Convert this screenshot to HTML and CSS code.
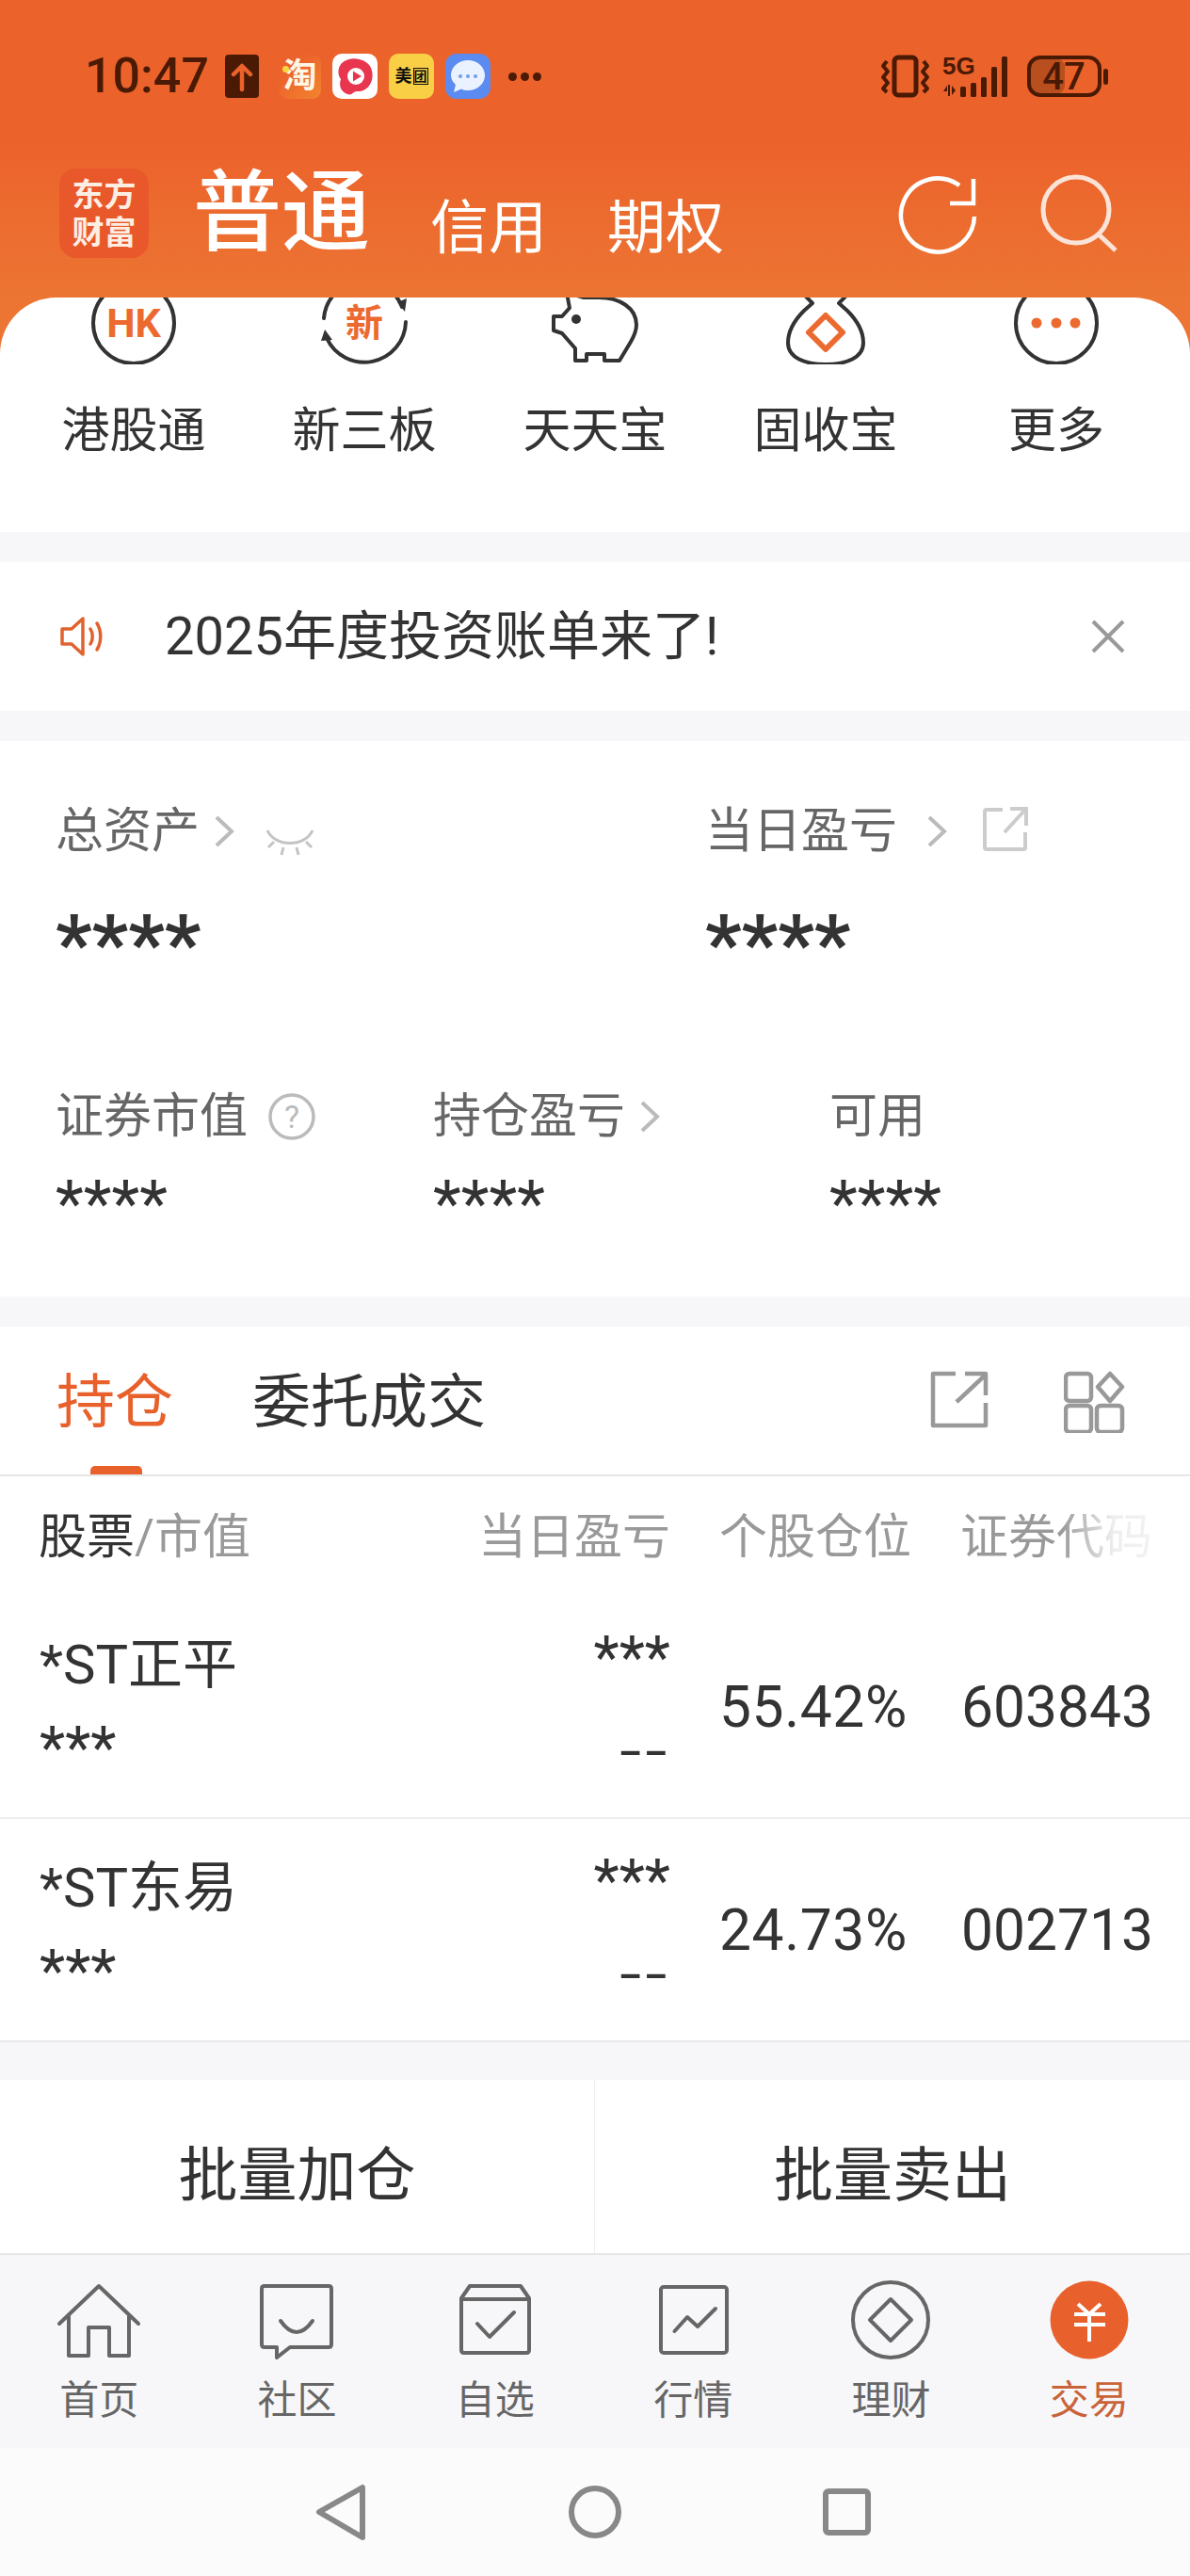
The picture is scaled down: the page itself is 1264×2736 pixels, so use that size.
FILE: index.html
```html
<!DOCTYPE html>
<html lang="zh-CN">
<head>
<meta charset="utf-8">
<title>交易</title>
<link rel="stylesheet" href="styles.css">
</head>
<body>
<div class="page">
  <header class="hero">
    <div class="status">
      <span class="time">10:47</span>
      <span class="st-up"><svg width="36" height="46" viewBox="0 0 36 46"><path class="up-arrow" d="M18 37V13M9 21l9-9 9 9"/></svg></span>
      <span class="st-tao"><i class="tao-dot"></i>淘</span>
      <span class="st-play"><svg width="48" height="48" viewBox="0 0 48 48"><path class="play-blob" d="M10 10C18 2 36 4 41 15c5 12-2 26-15 25-4 0-5 5-10 3C8 40 7 33 9 27 5 22 6 14 10 10Z"/><circle class="play-disc" cx="25" cy="24" r="9"/><path class="play-tri" d="M22 18.500L31 24l-9 5.500Z"/></svg></span>
      <span class="st-mt"><span class="mt-text">美</span><span class="mt-box">团</span></span>
      <span class="st-msg"><svg width="48" height="48" viewBox="0 0 48 48"><path class="msg-bubble" d="M24 7c10 0 18 7 18 16s-8 16-18 16c-3 0-5-.5-7-1.500L9 41l2-8c-3-3-5-6-5-10C6 14 14 7 24 7Z"/><circle class="msg-dot" cx="16" cy="24" r="2"/><circle class="msg-dot" cx="24" cy="24" r="2"/><circle class="msg-dot" cx="32" cy="24" r="2"/></svg></span>
      <span class="st-more"><i></i><i></i><i></i></span>
      <span class="st-right">
        <svg width="51" height="44" viewBox="0 0 51 44"><rect class="sb-line sb-thick" x="14" y="2" width="23" height="40" rx="4"/><path class="sb-line" d="M6 6L2 11l5 6-5 6 5 6-5 6 4 4M45 6l4 5-5 6 5 6-5 6 5 6-4 4"/></svg>
        <svg width="71" height="46" viewBox="0 0 71 46"><text class="sb-5g" x="0" y="21">5G</text><path class="sb-fill" d="M6 32v12h2V32ZM1 39l4-6v6ZM10 33v10l4-5Z"/><rect class="sb-fill" x="19" y="34" width="6" height="11" rx="1.500"/><rect class="sb-fill" x="30" y="30" width="6" height="15" rx="1.500"/><rect class="sb-fill" x="41" y="24" width="6" height="21" rx="1.500"/><rect class="sb-fill" x="52" y="13" width="6" height="32" rx="1.500"/><rect class="sb-fill" x="63" y="2" width="6" height="43" rx="1.500"/></svg>
        <svg width="86" height="46" viewBox="0 0 86 46"><rect class="bat-fill" x="3" y="4" width="37" height="38" rx="9"/><rect class="sb-line" x="2" y="3" width="75" height="40" rx="12"/><rect class="sb-fill" x="81" y="15" width="5" height="17" rx="2.500"/><text class="bat-text" x="39" y="37">47</text></svg>
      </span>
    </div>
    <div class="hero-row">
      <div class="logo"><span>东方</span><span>财富</span></div>
      <span class="mode mode-on">普通</span>
      <span class="mode">信用</span>
      <span class="mode">期权</span>
      <div class="hero-icons">
        <svg width="90" height="90" viewBox="0 0 90 90"><path class="ic-white" d="M84 46A39 39 0 1 1 68 13M83 6V32H58"/></svg>
        <svg width="90" height="90" viewBox="0 0 90 90"><circle class="ic-cream" cx="43" cy="44" r="35"/><path class="ic-cream" d="M68 71L85 87"/></svg>
      </div>
    </div>
  </header>

  <section class="shortcuts">
    <div class="sc-item">
      <svg class="sc-icon" width="100" height="71" viewBox="0 17 100 71"><circle class="ln-dark" cx="50" cy="44" r="43"/><text class="sc-glyph sc-hk" x="50" y="59">HK</text></svg>
      <span>港股通</span>
    </div>
    <div class="sc-item">
      <svg class="sc-icon" width="100" height="71" viewBox="0 17 100 71"><path class="ln-dark" d="M7 39A43 43 0 0 1 90 27M94 43A44 44 0 0 1 10 60"/><path class="fl-dark" d="M85 22L95 18 93 32ZM8 51L4 63 16 62Z"/><text class="sc-glyph sc-new" x="50" y="58">新</text></svg>
      <span>新三板</span>
    </div>
    <div class="sc-item">
      <svg class="sc-icon" width="100" height="71" viewBox="0 17 100 71"><path class="ln-dark" d="M20 12L23 28 15 37H6V52L15 55 29 71V84H41V77H60V84H76L88 64C92 57 94 52 94 46 94 28 76 17 54 17H38Z"/><circle class="fl-dark" cx="30" cy="40" r="5"/></svg>
      <span>天天宝</span>
    </div>
    <div class="sc-item">
      <svg class="sc-icon" width="100" height="71" viewBox="0 17 100 71"><path class="ln-dark" d="M27 14L36 23 27 31C16 42 10 54 10 65 10 81 28 88 50 88S90 81 90 65C90 54 84 42 73 31L64 23 73 14"/><path class="ln-orange" d="M50 36L68 54 50 72 32 54Z"/></svg>
      <span>固收宝</span>
    </div>
    <div class="sc-item">
      <svg class="sc-icon" width="100" height="71" viewBox="0 17 100 71"><circle class="ln-dark" cx="50" cy="44" r="43"/><circle class="fl-orange" cx="29" cy="44" r="5.500"/><circle class="fl-orange" cx="50" cy="44" r="5.500"/><circle class="fl-orange" cx="70" cy="44" r="5.500"/></svg>
      <span>更多</span>
    </div>
  </section>

  <section class="notice">
    <svg width="50" height="44" viewBox="0 0 50 44"><path class="ln-speaker" d="M3 14H13L25 3V41L13 30H3ZM33 14C36 18 36 26 33 30M40 8C45 16 45 28 40 36"/></svg>
    <span class="notice-text">2025年度投资账单来了!</span>
    <svg class="notice-close" width="38" height="38" viewBox="0 0 38 38"><path class="ln-close" d="M3 3L35 35M35 3L3 35"/></svg>
  </section>

  <section class="assets">
    <div class="asset-top">
      <div class="asset-main">
        <div class="a-label">总资产<svg class="chev" width="24" height="36" viewBox="0 0 24 36"><path d="M4 3L20 18 4 33"/></svg><svg class="eye" width="52" height="30" viewBox="0 0 52 30"><path d="M2 2C10 20 42 20 50 2M9 14L3 20M19 20L17 28M33 20L35 28M43 14L49 20"/></svg></div>
        <div class="big-stars">****</div>
      </div>
      <div class="asset-main">
        <div class="a-label">当日盈亏<svg class="chev chev-wide" width="24" height="36" viewBox="0 0 24 36"><path d="M4 3L20 18 4 33"/></svg><svg class="share-lt" width="50" height="50" viewBox="0 0 50 50"><path d="M22 4H5Q3 4 3 6V44Q3 46 5 46H44Q46 46 46 44V28M24 28L46 4M30 3H47V21"/></svg></div>
        <div class="big-stars">****</div>
      </div>
    </div>
    <div class="asset-sub">
      <div>
        <div class="a-label">证券市值<svg class="help" width="52" height="52" viewBox="0 0 52 52"><circle cx="26" cy="26" r="23"/><text x="26" y="38">?</text></svg></div>
        <div class="small-stars">****</div>
      </div>
      <div>
        <div class="a-label">持仓盈亏<svg class="chev chev-near" width="24" height="36" viewBox="0 0 24 36"><path d="M4 3L20 18 4 33"/></svg></div>
        <div class="small-stars">****</div>
      </div>
      <div>
        <div class="a-label">可用</div>
        <div class="small-stars">****</div>
      </div>
    </div>
  </section>

  <section class="holdings">
    <div class="h-tabs">
      <span class="h-tab h-tab-on">持仓</span>
      <span class="h-tab">委托成交</span>
      <span class="h-tools">
        <svg width="62" height="62" viewBox="0 0 62 62"><path class="ln-grey" d="M27 3H3V58H59V34M28 33L59 4M37 3H59V26"/></svg>
        <svg width="66" height="66" viewBox="0 0 66 66"><rect class="ln-grey" x="2" y="3" width="27" height="29" rx="4"/><rect class="ln-grey" x="2" y="37" width="27" height="28" rx="4"/><rect class="ln-grey" x="35" y="37" width="27" height="28" rx="4"/><path class="ln-grey" d="M49 3L62 17 49 32 36 17Z"/></svg>
      </span>
    </div>
    <div class="t-head">
      <span class="t-first"><b>股票</b>/市值</span>
      <span class="t-right">当日盈亏</span>
      <span class="t-third">个股仓位</span>
      <span class="t-fade">证券代码</span>
    </div>
    <div class="t-row">
      <div class="t-name"><div class="n-title">*ST正平</div><div class="n-stars">***</div></div>
      <div class="t-pl"><div class="n-stars">***</div><div class="n-dash">--</div></div>
      <div class="t-third t-num">55.42%</div>
      <div class="t-num">603843</div>
    </div>
    <div class="t-row">
      <div class="t-name"><div class="n-title">*ST东易</div><div class="n-stars">***</div></div>
      <div class="t-pl"><div class="n-stars">***</div><div class="n-dash">--</div></div>
      <div class="t-third t-num">24.73%</div>
      <div class="t-num">002713</div>
    </div>
  </section>

  <section class="bulk">
    <div class="bulk-btn">批量加仓</div>
    <div class="bulk-btn">批量卖出</div>
  </section>

  <nav class="tabbar">
    <div class="tb-item"><svg width="90" height="90" viewBox="0 0 90 90"><path class="ln-nav" d="M3 48L45 8 87 48M13 40V82H34V52H56V82H77V40"/></svg><span>首页</span></div>
    <div class="tb-item"><svg width="90" height="90" viewBox="0 0 90 90"><path class="ln-nav" d="M11 8H79Q82 8 82 11V70Q82 73 79 73H38L24 84V73H11Q8 73 8 70V11Q8 8 11 8ZM28 45Q45 69 62 45"/></svg><span>社区</span></div>
    <div class="tb-item"><svg width="90" height="90" viewBox="0 0 90 90"><path class="ln-nav" d="M18 8H72L81 21V76Q81 79 78 79H12Q9 79 9 76V21ZM9 22H81M26 48L39 62 65 36"/></svg><span>自选</span></div>
    <div class="tb-item"><svg width="90" height="90" viewBox="0 0 90 90"><rect class="ln-nav" x="11" y="9" width="70" height="70" rx="3"/><path class="ln-nav" d="M25.500 56L39 41 50 51 69 32"/></svg><span>行情</span></div>
    <div class="tb-item"><svg width="90" height="90" viewBox="0 0 90 90"><circle class="ln-nav" cx="45" cy="44" r="40"/><path class="ln-nav" d="M45 22L67 44 45 66 23 44Z"/></svg><span>理财</span></div>
    <div class="tb-item tb-on"><svg width="90" height="90" viewBox="0 0 90 90"><circle class="fl-active" cx="45" cy="44" r="41.500"/><path class="ln-yen" d="M33 27L45 38 57 27M29 38H62M29 49H62M45 38V67"/></svg><span>交易</span></div>
  </nav>

  <div class="sysnav">
    <svg width="60" height="60" viewBox="0 0 60 60"><path class="ln-sys" d="M7 30L53 4V57Z"/></svg>
    <svg width="60" height="60" viewBox="0 0 60 60"><circle class="ln-sys" cx="30" cy="30" r="25"/></svg>
    <svg width="60" height="60" viewBox="0 0 60 60"><rect class="ln-sys" x="5" y="8" width="45" height="44" rx="3"/></svg>
  </div>
</div>
</body>
</html>
```
FILE: styles.css
```css
* { box-sizing: border-box; }
html, body { margin: 0; padding: 0; }
body {
  font-family: Roboto, "Noto Sans CJK SC", sans-serif;
  color: #333;
  background: #f7f7f9;
}
.page {
  width: 1264px;
  height: 2736px;
  overflow: hidden;
  display: flex;
  flex-direction: column;
}

/* hero */
.hero {
  height: 376px;
  flex: none;
  background: linear-gradient(180deg, #ec622b 0, #ec622b 150px, #ec7533 316px, #ec7533 376px);
}
.status {
  height: 162px;
  padding-left: 90px;
  padding-right: 87px;
  display: flex;
  align-items: center;
  color: #4a1a05;
}
.time { font-size: 52px; font-weight: 500; line-height: 1; width: 128px; }
.st-up {
  width: 36px; height: 46px; margin-left: 21px;
  background: #4a1a05; border-radius: 4px; display: flex;
}
.up-arrow { fill: none; stroke: #ec622b; stroke-width: 4.500; stroke-linecap: round; stroke-linejoin: round; }
.st-tao {
  position: relative;
  width: 45px; height: 47px; margin-left: 21px;
  background: linear-gradient(135deg, #ec622b 30%, #f2852f 100%);
  border-radius: 9px;
  color: #fff6e6;
  font-size: 36px; font-weight: 700; line-height: 47px; text-align: center;
}
.tao-dot {
  position: absolute; left: 4px; top: 12px;
  width: 7px; height: 7px; border-radius: 50%; background: #f8d840;
}
.st-play {
  width: 48px; height: 48px; margin-left: 12px;
  background: #fff; border-radius: 10px; display: flex;
}
.play-blob { fill: #e8364f; }
.play-disc { fill: #fff; }
.play-tri { fill: #e8364f; }
.st-mt {
  width: 48px; height: 48px; margin-left: 12px;
  background: #f8cf45; border-radius: 10px;
  display: flex; align-items: center; justify-content: center;
  color: #111; font-size: 18px; font-weight: 700; line-height: 1;
}
.mt-box { border: 1.500px solid #111; font-size: 14px; line-height: 16px; margin-left: 1px; }
.st-msg { width: 48px; height: 48px; margin-left: 12px; background: #5b8bf0; border-radius: 12px; display: flex; }
.msg-bubble { fill: #eaf2ff; }
.msg-dot { fill: #6f9cf2; }
.st-more { display: flex; gap: 4px; margin-left: 19px; }
.st-more i { width: 9px; height: 9px; border-radius: 50%; background: #4a1a05; }
.st-right { margin-left: auto; display: flex; align-items: center; gap: 14px; }
.st-right svg { overflow: visible; }
.st-right svg:last-child { margin-left: 5px; }
.sb-line { fill: none; stroke: #4a1a05; stroke-width: 4; stroke-linejoin: round; }
.sb-thick { stroke-width: 5; }
.sb-fill { fill: #4a1a05; }
.sb-5g { font-family: "Liberation Sans", sans-serif; font-size: 26px; font-weight: 700; fill: #4a1a05; }
.bat-fill { fill: #b94e1e; }
.bat-text { font-size: 40px; font-weight: 500; fill: #4a1a05; text-anchor: middle; }

.hero-row {
  display: flex;
  align-items: flex-end;
  padding: 17px 74px 0 63px;
  color: #fff;
}
.logo {
  width: 95px; height: 95px;
  align-self: flex-start;
  margin-right: 47px;
  background: #e9582a;
  border-radius: 18px;
  display: flex; flex-direction: column; align-items: center; justify-content: center;
  font-size: 34px; font-weight: 700; line-height: 40px;
  color: #fdeee4;
}
.mode { font-size: 62px; line-height: 1; margin-right: 64px; flex: none; }
.mode-on { font-size: 94px; font-weight: 500; }
.hero-icons { margin-left: auto; align-self: flex-start; display: flex; gap: 59px; }
.hero-icons svg:first-child { margin-top: 5px; }
.ic-white { fill: none; stroke: #fff; stroke-width: 4.500; }
.ic-cream { fill: none; stroke: #fbe3d8; stroke-width: 5; }

/* shortcuts */
.shortcuts {
  flex: none;
  height: 249px;
  margin-top: -60px;
  padding: 0 19.500px;
  background: #fff;
  border-radius: 60px 60px 0 0;
  display: grid;
  grid-template-columns: repeat(5, 245px);
  position: relative;
}
.sc-item {
  display: flex; flex-direction: column; align-items: center;
  font-size: 51px; line-height: 1; color: #333;
}
.sc-icon { margin-bottom: 45px; }
.ln-dark { fill: none; stroke: #333; stroke-width: 4; stroke-linejoin: round; stroke-linecap: round; }
.fl-dark { fill: #333; }
.ln-orange { fill: none; stroke: #ec6a30; stroke-width: 6; stroke-linejoin: round; }
.fl-orange { fill: #ec6a30; }
.sc-glyph { font-weight: 700; fill: #ec6a30; text-anchor: middle; }
.sc-hk { font-size: 43px; }
.sc-new { font-size: 40px; }

/* notice */
.notice {
  flex: none;
  height: 158px;
  margin-top: 32px;
  padding: 0 68px 0 63px;
  background: #fff;
  display: flex;
  align-items: center;
}
.ln-speaker { fill: none; stroke: #e0632f; stroke-width: 3.500; stroke-linejoin: round; stroke-linecap: round; }
.notice-text { margin-left: 62px; font-size: 56px; line-height: 1; color: #333; }
.notice-close { margin-left: auto; }
.ln-close { fill: none; stroke: #999; stroke-width: 4; }

/* assets */
.assets {
  flex: none;
  height: 590px;
  margin-top: 32px;
  padding: 71px 0 0 59px;
  background: #fff;
}
.asset-top { display: flex; }
.asset-main { width: 690px; flex: none; }
.a-label {
  display: flex; align-items: center;
  height: 50px;
  font-size: 51px; line-height: 50px; color: #666;
}
.chev { margin-left: 14px; fill: none; stroke: #bbb; stroke-width: 4; flex: none; }
.chev-wide { margin-left: 30px; }
.chev-near { margin-left: 14px; }
.eye { margin-left: 32px; margin-top: 24px; fill: none; stroke: #c4c4c4; stroke-width: 3; flex: none; }
.share-lt { margin-left: 36px; margin-top: -4px; fill: none; stroke: #ccc; stroke-width: 4; flex: none; }
.big-stars {
  margin-top: 50px;
  height: 90px;
  font-size: 85px; line-height: 90px; font-weight: 700; color: #333;
}
.asset-sub {
  display: grid;
  grid-template-columns: 401px 421px 1fr;
  margin-top: 113px;
}
.help { margin-left: 21px; fill: none; stroke: #bbb; stroke-width: 3.500; flex: none; }
.help text { fill: #bbb; stroke: none; font-size: 34px; text-anchor: middle; }
.small-stars {
  margin-top: 35px;
  height: 66px;
  font-size: 69px; line-height: 66px; color: #333;
}

/* holdings */
.holdings { flex: none; margin-top: 32px; background: #fff; }
.h-tabs {
  height: 159px;
  padding: 50px 68px 0 60px;
  border-bottom: 2px solid #e6e6e6;
  display: flex;
  align-items: flex-start;
  font-size: 62px; line-height: 62px; color: #333;
}
.h-tab { position: relative; margin-right: 84px; flex: none; }
.h-tab-on { color: #e8612c; }
.h-tab-on::after {
  content: "";
  position: absolute;
  left: 36px; top: 98px;
  width: 55px; height: 9px;
  background: #e8612c;
  border-radius: 5px 5px 0 0;
}
.h-tools { margin: -3px 0 0 auto; display: flex; gap: 80px; }
.ln-grey { fill: none; stroke: #999; stroke-width: 4.500; stroke-linejoin: round; }

.t-head, .t-row {
  display: grid;
  grid-template-columns: 300px 369px 310px 243px;
  padding-left: 42px;
}
.t-head {
  height: 127px;
  padding-top: 2px;
  align-items: center;
  font-size: 51px; line-height: 50px; color: #999;
}
.t-first { margin-left: -1px; }
.t-first b { font-weight: 400; color: #333; }
.t-right, .t-pl { text-align: right; }
.t-right { margin-right: -1px; }
.t-third { padding-left: 53px; }
.t-fade {
  width: 204px;
  margin-left: -1px;
  background: linear-gradient(90deg, #999 0, #999 52%, #eee 80%, #f2f2f2 100%);
  -webkit-background-clip: text;
  background-clip: text;
  color: transparent;
}
.t-row {
  height: 237px;
  align-items: center;
  border-bottom: 2px solid #eee;
}
.t-row:last-child { border-bottom: 2px solid #eaeaea; }
.t-name, .t-pl { display: flex; flex-direction: column; }
.t-pl { align-items: flex-end; margin-right: -1px; }
.n-title { font-size: 58px; line-height: 60px; height: 60px; color: #333; margin-top: 1px; }
.n-stars { font-size: 63px; line-height: 62px; height: 62px; color: #333; }
.t-name .n-stars { margin-top: 28px; }
.t-pl .n-stars { margin-top: -8px; }
.n-dash {
  margin-top: 41px;
  height: 54px;
  font-size: 84px; font-weight: 300; line-height: 54px; letter-spacing: 3px; color: #333;
}
.t-num { font-size: 60.500px; line-height: 60px; color: #333; padding-top: 2px; }
.t-third.t-num { letter-spacing: .6px; }

/* bulk */
.bulk {
  flex: none;
  height: 186px;
  margin-top: 40px;
  background: #fff;
  border-bottom: 2px solid #e6e6e6;
  display: grid;
  grid-template-columns: 1fr 1fr;
  font-size: 63px; line-height: 1; color: #333;
}
.bulk-btn { display: flex; align-items: center; justify-content: center; padding-top: 19px; }
.bulk-btn:first-child { border-right: 1px solid #eee; }

/* tab bar */
.tabbar {
  flex: none;
  height: 205px;
  padding: 25px 2px 0 0;
  background: #f7f7f9;
  display: grid;
  grid-template-columns: repeat(6, 1fr);
}
.tb-item {
  display: flex; flex-direction: column; align-items: center;
  font-size: 42px; line-height: 1; color: #666;
}
.tb-item span { margin-top: 19px; }
.tb-on { color: #c9633a; }
.ln-nav { fill: none; stroke: #666; stroke-width: 4; stroke-linejoin: round; stroke-linecap: round; }
.fl-active { fill: #e8612c; }
.ln-yen { fill: none; stroke: #fff; stroke-width: 4; }

/* system nav */
.sysnav {
  flex: 1;
  background: #fbfbfc;
  display: flex;
  align-items: center;
  justify-content: center;
  gap: 210px;
}
.ln-sys { fill: none; stroke: #888; stroke-width: 6; stroke-linejoin: round; }
```
